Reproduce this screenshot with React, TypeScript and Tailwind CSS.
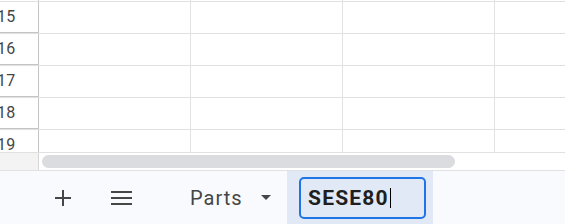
const rows = [15, 16, 17, 18, 19]
const cols = [0, 1, 2, 3]

function PlusIcon() {
    return (
        <svg width="16" height="16" viewBox="0 0 16 16" className="shrink-0">
            <path d="M8 0v16M0 8h16" stroke="#444746" strokeWidth="2" fill="none"/>
        </svg>
    )
}

function MenuIcon() {
    return (
        <svg width="21" height="14" viewBox="0 0 21 14" className="shrink-0">
            <path d="M0 1h21M0 7h21M0 13h21" stroke="#444746" strokeWidth="2" fill="none"/>
        </svg>
    )
}

export default function App() {
    return (
        <div className="w-[565px] h-[224px] overflow-hidden bg-white font-['Roboto',sans-serif]">
            {/* grid */}
            <div className="h-[152px] overflow-hidden">
                <div className="h-[2px] flex border-b border-[#e1e1e1]">
                    <div className="w-[39px] shrink-0 border-r border-[#c4c4c4]"/>
                    {cols.map((c) => (
                        <div key={c} className="w-[152px] shrink-0 border-r border-[#e1e1e1]"/>
                    ))}
                </div>
                {rows.map((r) => (
                    <div key={r} className="h-[32px] flex border-b border-[#e1e1e1]">
                        <div className="w-[39px] shrink-0 border-r border-b border-[#c4c4c4] flex items-center overflow-hidden">
                            <span className="ml-[-3px] text-[16px] leading-none tracking-[0.3px] text-[#444746]">{r}</span>
                        </div>
                        {cols.map((c) => (
                            <div key={c} className="w-[152px] shrink-0 border-r border-[#e1e1e1]"/>
                        ))}
                    </div>
                ))}
            </div>

            {/* horizontal scrollbar */}
            <div className="h-[19px] flex border-t border-b border-[#e1e1e1]">
                <div className="w-[39px] shrink-0 bg-[#f3f3f3] border-r border-[#d6d6d6]"/>
                <div className="flex-1 pl-[3px] pt-[2px]">
                    <div className="w-[413px] h-[13px] rounded-full bg-[#dadce0]"/>
                </div>
            </div>

            {/* sheet tabs bar */}
            <div className="h-[53px] flex items-stretch bg-[#f9fafd]">
                <div className="flex items-center pl-[55px]">
                    <PlusIcon/>
                </div>
                <div className="flex items-center pl-[40px]">
                    <MenuIcon/>
                </div>
                <div className="w-[155px] shrink-0 flex items-center pl-[58px] gap-[18px]">
                    <span className="text-[20px] leading-none tracking-[1px] text-[#444746]">Parts</span>
                    <svg width="10" height="5" viewBox="0 0 10 5">
                        <path d="M0 0h10L5 5z" fill="#444746"/>
                    </svg>
                </div>
                <div className="w-[146px] shrink-0 bg-[#e1e9f7] pl-[12px] pt-[6px]">
                    <div className="w-[127px] h-[42px] rounded-[5px] border-2 border-[#1f74e7] flex items-center pl-[7px]">
                        <span className="text-[21px] font-bold leading-none tracking-[1.2px] text-[#1f1f1f]">SESE80</span>
                        <span className="ml-[1px] h-[20px] border-l border-black"/>
                    </div>
                </div>
            </div>
        </div>
    )
}
